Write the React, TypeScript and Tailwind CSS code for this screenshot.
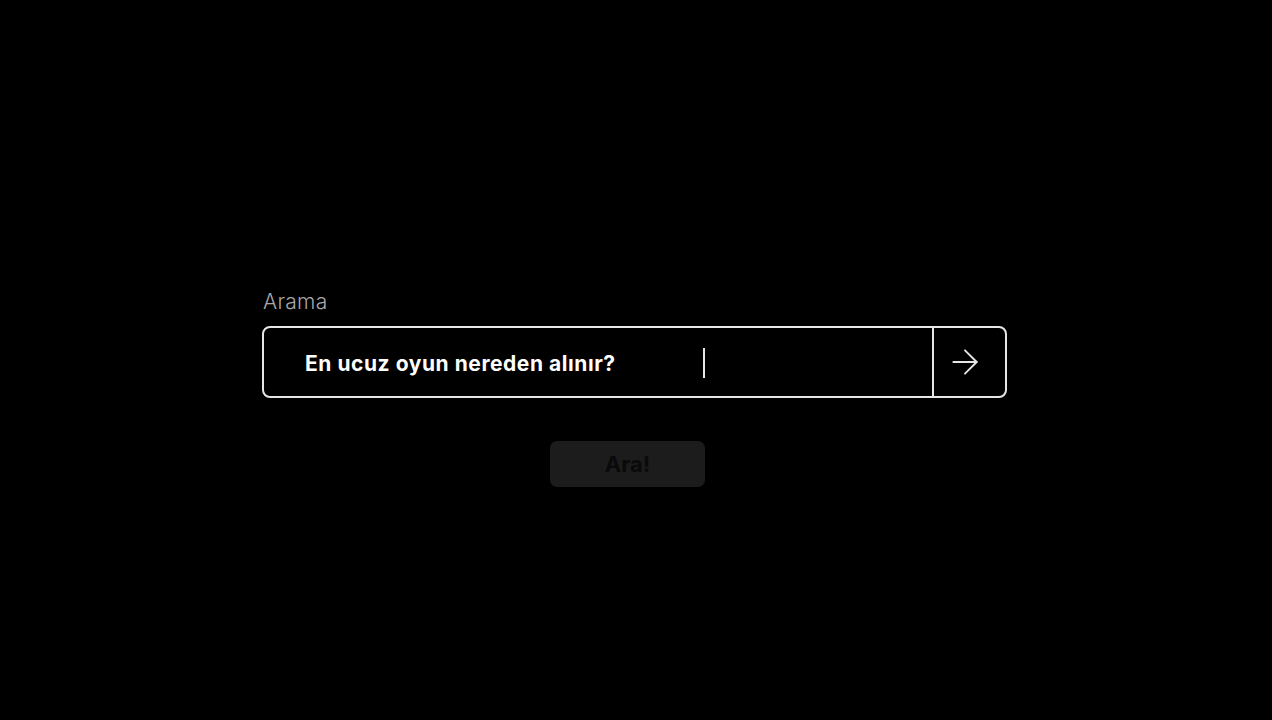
export default function App() {
    return (
        <div className="min-h-[720px] w-full bg-black font-['Inter',sans-serif]">
            <div className="flex flex-col pl-[262px] pt-[289px]">
                <label className="ml-[1px] text-[21px] font-light leading-[26px] tracking-[0.3px] text-[#a8a8a8]">Arama</label>
                <div className="mt-[11px] flex h-[72px] w-[745px] items-stretch rounded-[8px] border-2 border-[#e6e6e6]">
                    <div className="relative flex flex-1 items-center pl-[41px] pt-[4px]">
                        <span className="text-[21px] font-bold tracking-[0.55px] text-white">En ucuz oyun nereden alınır?</span>
                        <span className="absolute left-[439px] top-[20px] h-[30px] w-[2px] bg-[#e6e6e6]" />
                    </div>
                    <div className="w-[2px] bg-[#e6e6e6]" />
                    <button className="flex w-[71px] items-center justify-center pr-[10px]">
                        <svg width="28" height="28" viewBox="0 0 24 24" fill="none" stroke="#e6e6e6" strokeWidth="1.6" strokeLinecap="round" strokeLinejoin="round">
                            <path d="M2 12h20" />
                            <path d="M12 2l10 10-10 10" />
                        </svg>
                    </button>
                </div>
                <button className="ml-[288px] mt-[43px] flex h-[46px] w-[155px] items-center justify-center rounded-[7px] bg-[#1c1c1c] text-[22px] font-bold text-[#0a0a0a]">
                    Ara!
                </button>
            </div>
        </div>
    )
}
